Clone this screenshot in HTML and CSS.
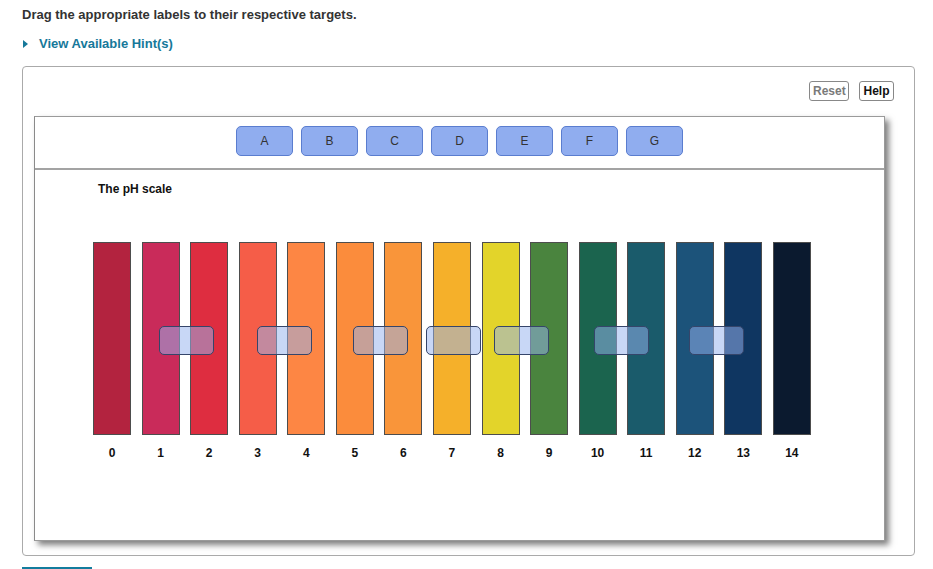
FILE: index.html
```html
<!DOCTYPE html>
<html>
<head>
<meta charset="utf-8">
<link rel="stylesheet" href="styles.css">
</head>
<body>
<div class="page">
  <p class="instructions">Drag the appropriate labels to their respective targets.</p>
  <p class="hint"><span class="tri"></span>View Available Hint(s)</p>
  <div class="outer">
    <div class="toolbar">
      <button class="tbtn reset">Reset</button>
      <button class="tbtn help">Help</button>
    </div>
    <div class="panel">
      <div class="labels">
        <div class="lbl">A</div>
        <div class="lbl">B</div>
        <div class="lbl">C</div>
        <div class="lbl">D</div>
        <div class="lbl">E</div>
        <div class="lbl">F</div>
        <div class="lbl">G</div>
      </div>
      <div class="content">
        <div class="title">The pH scale</div>
        <div class="chart">
          <div class="bars">
            <div class="bar c0"></div>
            <div class="bar c1"></div>
            <div class="bar c2"></div>
            <div class="bar c3"></div>
            <div class="bar c4"></div>
            <div class="bar c5"></div>
            <div class="bar c6"></div>
            <div class="bar c7"></div>
            <div class="bar c8"></div>
            <div class="bar c9"></div>
            <div class="bar c10"></div>
            <div class="bar c11"></div>
            <div class="bar c12"></div>
            <div class="bar c13"></div>
            <div class="bar c14"></div>
          </div>
          <div class="nums">
            <span>0</span><span>1</span><span>2</span><span>3</span><span>4</span><span>5</span><span>6</span><span>7</span><span>8</span><span>9</span><span>10</span><span>11</span><span>12</span><span>13</span><span>14</span>
          </div>
          <div class="target t1"></div>
          <div class="target t2"></div>
          <div class="target t3"></div>
          <div class="target t4"></div>
          <div class="target t5"></div>
          <div class="target t6"></div>
          <div class="target t7"></div>
        </div>
      </div>
    </div>
  </div>
  <div class="submit"></div>
</div>
</body>
</html>
```

FILE: styles.css
```css
html, body {
  margin: 0;
  padding: 0;
  background: #fff;
  overflow: hidden;
}
.page {
  padding: 8px 0 0 22px;
  font-family: "Liberation Sans", Arial, sans-serif;
  color: #333;
}
.instructions {
  margin: 0;
  font-size: 13px;
  line-height: 14px;
  font-weight: bold;
  color: #333;
}
.hint {
  margin: 15px 0 0 0;
  font-size: 13px;
  line-height: 14px;
  font-weight: bold;
  color: #16789a;
  display: flex;
  align-items: center;
}
.tri {
  width: 0;
  height: 0;
  border-top: 4px solid transparent;
  border-bottom: 4px solid transparent;
  border-left: 5px solid #16789a;
  margin: 0 11px 0 1px;
}
.outer {
  box-sizing: border-box;
  margin-top: 15px;
  width: 893px;
  height: 490px;
  border: 1px solid #aaa;
  border-radius: 4px;
  padding: 14px 20px 0 11px;
}
.toolbar {
  display: flex;
  justify-content: flex-end;
  gap: 10px;
  height: 20px;
}
.tbtn {
  box-sizing: border-box;
  height: 20px;
  padding: 0 3px;
  border: 1px solid #888;
  border-radius: 3px;
  background: #fff;
  font-family: "Liberation Sans", Arial, sans-serif;
  font-size: 12px;
  font-weight: bold;
}
.reset { color: #7a7a7a; width: 40px; }
.help { color: #111; width: 35px; }
.panel {
  box-sizing: border-box;
  margin-top: 15px;
  width: 851px;
  height: 425px;
  border: 1px solid #9a9a9a;
  border-left-color: #8a8a8a;
  box-shadow: 4px 4px 6px rgba(0, 0, 0, 0.5);
  background: #fff;
}
.labels {
  box-sizing: border-box;
  height: 53px;
  border-bottom: 2px solid #a3a3a3;
  padding-top: 9px;
  display: flex;
  justify-content: center;
  gap: 8px;
}
.lbl {
  box-sizing: border-box;
  width: 57px;
  height: 30px;
  background: #90adef;
  border: 1px solid #5a7dcf;
  border-radius: 5px;
  display: flex;
  align-items: center;
  justify-content: center;
  font-size: 12px;
  color: #333;
}
.content {
  padding: 12px 0 0 58px;
}
.title {
  padding-left: 5px;
  font-size: 12px;
  line-height: 14px;
  font-weight: bold;
  color: #111;
}
.chart {
  position: relative;
  margin-top: 46px;
  width: 720px;
}
.bars {
  display: flex;
  gap: 10.57px;
}
.bar {
  box-sizing: border-box;
  width: 38px;
  height: 193px;
  border: 1px solid #4d4d4d;
}
.c0 { background: #b3233f; }
.c1 { background: #c92b5a; }
.c2 { background: #de2d40; }
.c3 { background: #f55d48; }
.c4 { background: #fd8644; }
.c5 { background: #fb8c3c; }
.c6 { background: #f9953a; }
.c7 { background: #f5b02a; }
.c8 { background: #e3d42a; }
.c9 { background: #4a843e; }
.c10 { background: #1b644e; }
.c11 { background: #1a5b6b; }
.c12 { background: #1c537a; }
.c13 { background: #0f3661; }
.c14 { background: #0b1a2f; }
.nums {
  display: flex;
  gap: 10.57px;
  margin-top: 11px;
}
.nums span {
  width: 38px;
  text-align: center;
  font-size: 12px;
  line-height: 14px;
  font-weight: bold;
  color: #111;
}
.target {
  position: absolute;
  top: 84px;
  box-sizing: border-box;
  width: 55px;
  height: 29px;
  border: 1px solid #35456a;
  border-radius: 5px;
  background: rgba(150, 178, 238, 0.52);
}
.t1 { left: 66px; }
.t2 { left: 164px; }
.t3 { left: 260px; }
.t4 { left: 333px; }
.t5 { left: 401px; }
.t6 { left: 501px; }
.t7 { left: 596px; }
.submit {
  margin-top: 11px;
  width: 70px;
  height: 20px;
  background: #137d9e;
}
```
